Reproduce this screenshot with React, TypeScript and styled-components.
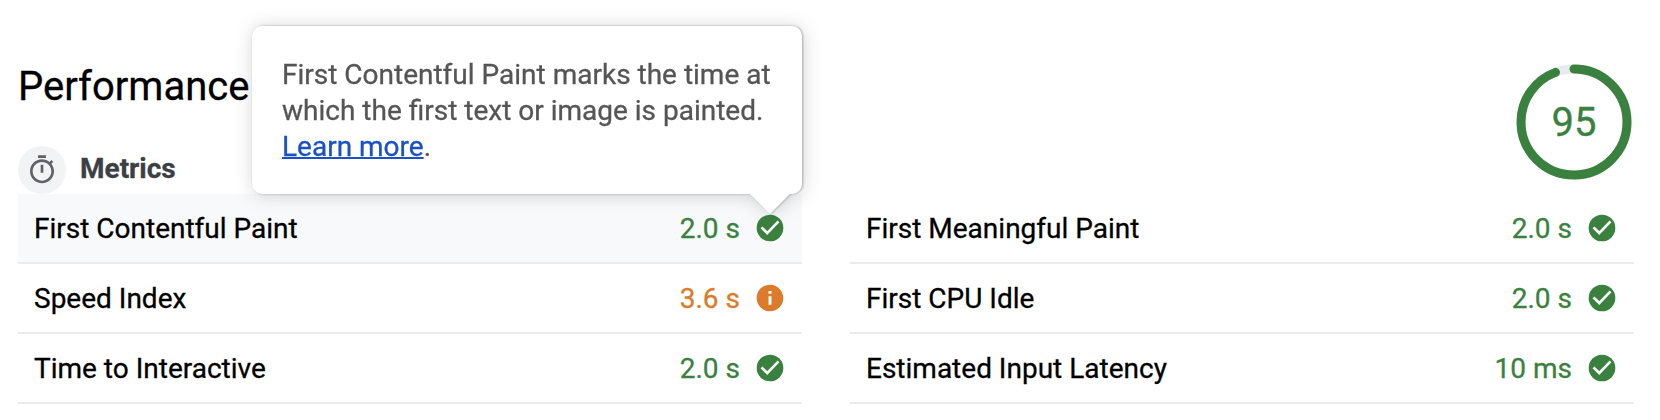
import React from "react";
import styled, { createGlobalStyle } from "styled-components";

const GlobalStyle = createGlobalStyle`
  body {
    margin: 0;
    background: #fff;
    color: #000;
    font-family: Roboto, "Liberation Sans", sans-serif;
    font-size: 28px;
    line-height: 36px;
    -webkit-text-stroke: 0.3px currentColor;
  }
`;

const GREEN = "#3a8140";
const ORANGE = "#db7b2b";

const Category = styled.main`
  box-sizing: border-box;
  width: 1660px;
  height: 420px;
  padding: 62px 26px 0 18px;
  overflow: hidden;
`;

const Header = styled.header`
  display: flex;
  justify-content: space-between;
  height: 132px;
`;

const Titles = styled.div`
  display: flex;
  flex-direction: column;
  justify-content: space-between;
`;

const Title = styled.h1`
  margin: 0;
  font-size: 40px;
  font-weight: 400;
  line-height: 50px;
`;

const GroupHeader = styled.div`
  display: flex;
  align-items: center;
  gap: 14px;
`;

const GroupIcon = styled.span`
  display: flex;
  align-items: center;
  justify-content: center;
  width: 48px;
  height: 48px;
  border-radius: 50%;
  background: #f1f3f4;
`;

const GroupTitle = styled.h2`
  margin: 0;
  padding-bottom: 2px;
  color: #3c4043;
  font-size: 28px;
  font-weight: 700;
`;

const Gauge = styled.div`
  display: grid;
  place-items: center;
  width: 120px;
  height: 120px;

  > * {
    grid-area: 1 / 1;
  }
`;

const GaugeScore = styled.span`
  padding-top: 2px;
  color: ${GREEN};
  font-size: 40px;
`;

const Columns = styled.div`
  display: grid;
  grid-template-columns: 784px 784px;
  column-gap: 48px;
`;

const MetricRow = styled.div<{ $active?: boolean }>`
  position: relative;
  display: flex;
  align-items: center;
  box-sizing: border-box;
  height: 70px;
  padding: 0 16px;
  border-bottom: 2px solid #ebebeb;
  background: ${(p) => (p.$active ? "#f8f9fa" : "transparent")};
`;

const MetricName = styled.span`
  flex: 1;
  padding-top: 2px;
`;

const MetricValue = styled.span<{ $color: string }>`
  margin-right: 14px;
  padding-top: 2px;
  color: ${(p) => p.$color};
`;

const Tooltip = styled.div`
  position: absolute;
  right: 0;
  bottom: 68px;
  box-sizing: border-box;
  width: 550px;
  padding: 31px 30px 29px;
  border-radius: 10px;
  background: #fff;
  color: #555;
  filter: drop-shadow(1px 0 1px rgba(0, 0, 0, 0.28)) drop-shadow(1px 1px 9px rgba(0, 0, 0, 0.17));

  &::after {
    content: "";
    position: absolute;
    top: 100%;
    right: 12px;
    border: 20px solid transparent;
    border-top-color: #fff;
    border-bottom-width: 0;
  }
`;

const TooltipLink = styled.a`
  color: #1a52c4;
  text-decoration: underline;
  text-decoration-thickness: 2px;
`;

const TimerIcon = () => (
  <svg width="32" height="32" viewBox="0 0 24 24" fill="#5f6368">
    <path d="M15 1H9v2h6V1zm-4 13h2V8h-2v6zm8.03-6.61l1.42-1.42c-.43-.51-.9-.99-1.41-1.41l-1.42 1.42C16.07 4.74 14.12 4 12 4c-4.97 0-9 4.03-9 9s4.02 9 9 9 9-4.03 9-9c0-2.12-.74-4.07-1.97-5.61zM12 20c-3.87 0-7-3.13-7-7s3.13-7 7-7 7 3.13 7 7-3.13 7-7 7z" />
  </svg>
);

const PassIcon = () => (
  <svg width="32" height="32" viewBox="0 0 24 24">
    <circle cx="12" cy="12" r="10" fill={GREEN} />
    <path d="M5.6 11.5L9.9 15.8L18.4 7" fill="none" stroke="#fff" strokeWidth="2" />
  </svg>
);

const InfoIcon = () => (
  <svg width="32" height="32" viewBox="0 0 24 24" fill={ORANGE}>
    <path d="M12 2C6.48 2 2 6.48 2 12s4.48 10 10 10 10-4.48 10-10S17.52 2 12 2zm1.1 15h-2.2v-6.4h2.2V17zm0-8.2h-2.2V6.7h2.2v2.1z" />
  </svg>
);

type Metric = { name: string; value: string; average?: boolean; description?: string };

const columns: Metric[][] = [
  [
    {
      name: "First Contentful Paint",
      value: "2.0 s",
      description: "First Contentful Paint marks the time at which the first text or image is painted.",
    },
    { name: "Speed Index", value: "3.6 s", average: true },
    { name: "Time to Interactive", value: "2.0 s" },
  ],
  [
    { name: "First Meaningful Paint", value: "2.0 s" },
    { name: "First CPU Idle", value: "2.0 s" },
    { name: "Estimated Input Latency", value: "10 ms" },
  ],
];

const ScoreGauge = ({ score }: { score: number }) => (
  <Gauge>
    <svg width="120" height="120" viewBox="0 0 120 120" fill="none" strokeWidth="9">
      <circle cx="60" cy="60" r="53" stroke="#e8eaed" />
      <circle
        cx="60"
        cy="60"
        r="53"
        stroke={GREEN}
        strokeLinecap="round"
        pathLength="360"
        strokeDasharray="339.5 360"
        transform="rotate(-90 60 60)"
      />
    </svg>
    <GaugeScore>{score}</GaugeScore>
  </Gauge>
);

export default function App() {
  return (
    <>
      <GlobalStyle />
      <Category>
        <Header>
          <Titles>
            <Title>Performance</Title>
            <GroupHeader>
              <GroupIcon>
                <TimerIcon />
              </GroupIcon>
              <GroupTitle>Metrics</GroupTitle>
            </GroupHeader>
          </Titles>
          <ScoreGauge score={95} />
        </Header>
        <Columns>
          {columns.map((metrics, i) => (
            <div key={i}>
              {metrics.map((m) => (
                <MetricRow key={m.name} $active={!!m.description}>
                  <MetricName>{m.name}</MetricName>
                  <MetricValue $color={m.average ? ORANGE : GREEN}>{m.value}</MetricValue>
                  {m.average ? <InfoIcon /> : <PassIcon />}
                  {m.description && (
                    <Tooltip role="tooltip">
                      {m.description} <TooltipLink href="#">Learn more</TooltipLink>.
                    </Tooltip>
                  )}
                </MetricRow>
              ))}
            </div>
          ))}
        </Columns>
      </Category>
    </>
  );
}
